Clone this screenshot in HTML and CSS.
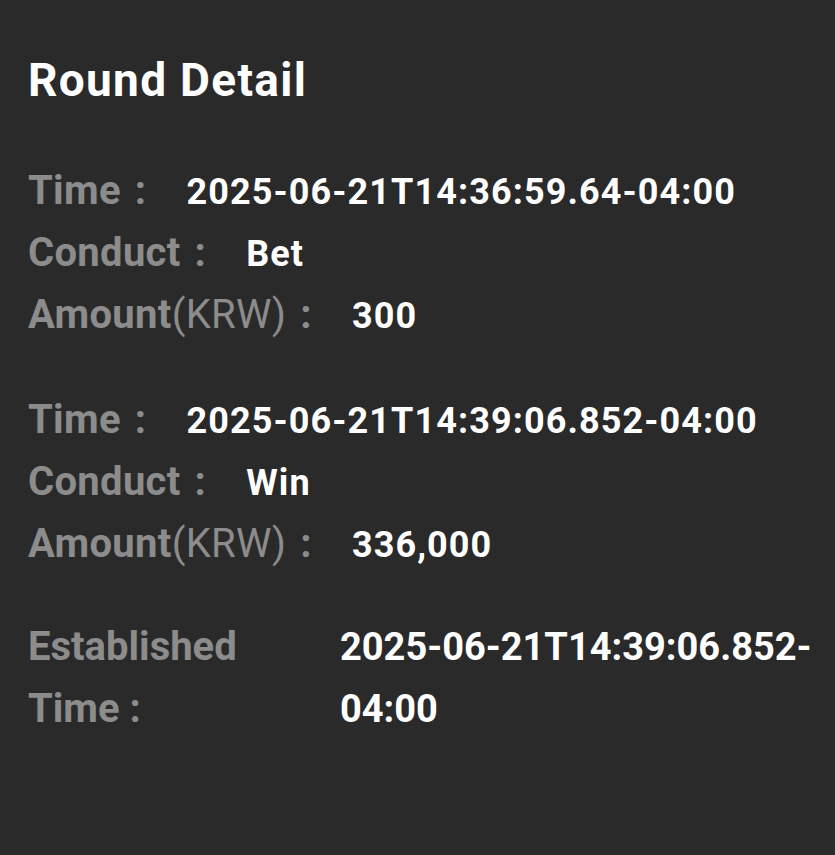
FILE: index.html
```html
<!DOCTYPE html>
<html>
<head>
<meta charset="utf-8">
<link rel="stylesheet" href="styles.css">
</head>
<body>
<div class="panel">
  <h1 class="title">Round Detail</h1>
  <div class="group">
    <div class="row"><span class="label">Time<span class="colon">:</span></span><span class="value">2025-06-21T14:36:59.64-04:00</span></div>
    <div class="row"><span class="label">Conduct<span class="colon">:</span></span><span class="value">Bet</span></div>
    <div class="row"><span class="label">Amount<span class="thin">(KRW)</span><span class="colon">:</span></span><span class="value">300</span></div>
  </div>
  <div class="group">
    <div class="row"><span class="label">Time<span class="colon">:</span></span><span class="value">2025-06-21T14:39:06.852-04:00</span></div>
    <div class="row"><span class="label">Conduct<span class="colon">:</span></span><span class="value">Win</span></div>
    <div class="row"><span class="label">Amount<span class="thin">(KRW)</span><span class="colon">:</span></span><span class="value">336,000</span></div>
  </div>
  <div class="established">
    <div class="est-label">Established Time :</div>
    <div class="est-value">2025-06-21T14:39:06.852-04:00</div>
  </div>
</div>
</body>
</html>
```
FILE: styles.css
```css
html, body {
  margin: 0;
  padding: 0;
  background: #2a2a2a;
}
body {
  font-family: Roboto, "Liberation Sans", sans-serif;
  width: 835px;
  height: 855px;
  overflow: hidden;
}
.panel {
  padding: 52px 28px 0 28px;
}
.title {
  margin: 0 0 52px 0;
  font-size: 46px;
  line-height: 56px;
  font-weight: 700;
  letter-spacing: 1.3px;
  color: #ffffff;
}
.group {
  margin-bottom: 43px;
}
.row {
  display: flex;
  align-items: baseline;
  height: 62px;
  line-height: 62px;
}
.label {
  color: #8c8c8c;
  font-size: 40px;
  font-weight: 700;
  letter-spacing: 0.3px;
}
.colon {
  margin-left: 14px;
  margin-right: 40px;
}
.thin {
  font-weight: 400;
}
.value {
  color: #ffffff;
  font-size: 36px;
  font-weight: 700;
  letter-spacing: 1.1px;
}
.established {
  display: flex;
  align-items: flex-start;
  margin-top: -2px;
}
.est-label {
  flex: 0 0 240px;
  margin-right: 72px;
  color: #8c8c8c;
  font-size: 40px;
  font-weight: 700;
  line-height: 62px;
}
.est-value {
  flex: 0 0 480px;
  color: #ffffff;
  font-size: 38px;
  font-weight: 700;
  line-height: 62px;
}
```
